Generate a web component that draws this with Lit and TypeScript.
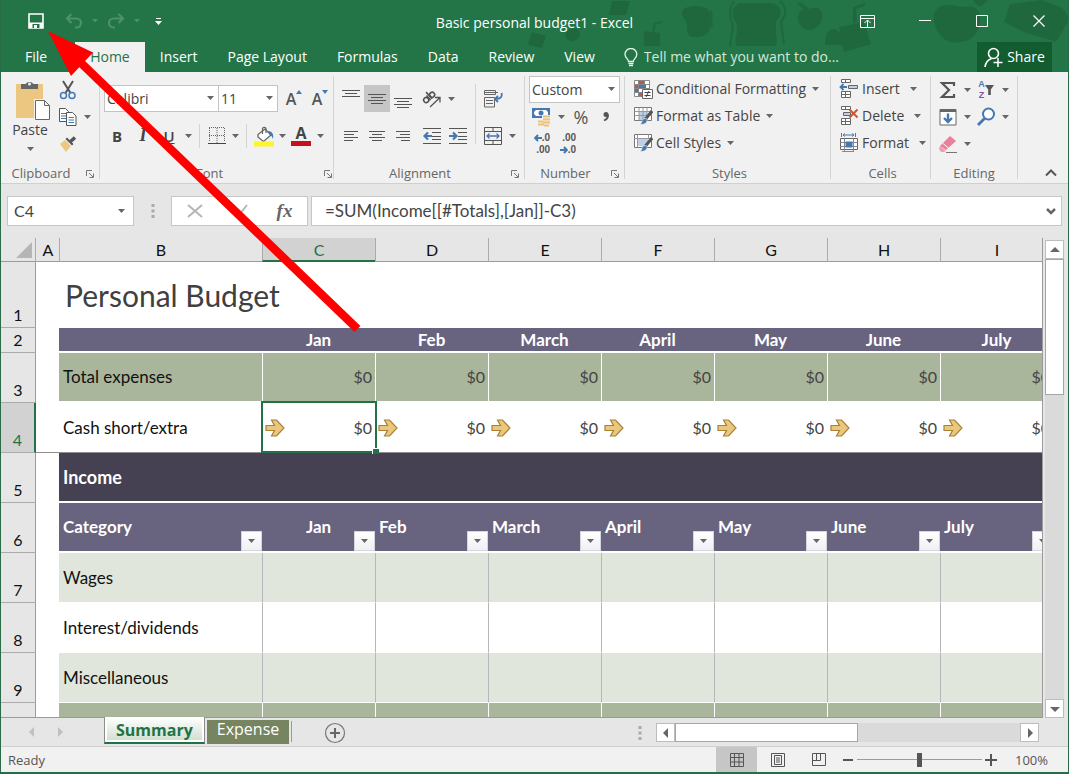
import { LitElement, html, css, svg, nothing } from "lit";
import { customElement, state } from "lit/decorators.js";
import { classMap } from "lit/directives/class-map.js";

const icon = (w: number, h: number, body: unknown) =>
  html`<svg class="icon" width=${w} height=${h} viewBox="0 0 ${w} ${h}" fill="none" aria-hidden="true">${body}</svg>`;

const caret = () => icon(7, 4, svg`<path d="M0 0h7L3.5 4z" fill="#666"/>`);

const launcher = html`<button class="launcher" aria-label="More options">
  ${icon(8, 8, svg`<path d="M.5 6V.5H6M3 3l4 4M7.5 3.5v4h-4" stroke="#777"/>`)}
</button>`;

const lines = (w: number, rows: [number, number, number][]) =>
  icon(w, 18, rows.map(([x, y, len]) => svg`<path d="M${x} ${y + 0.5}h${len}" stroke="#555"/>`));

const alignIcons = {
  top: lines(20, [[1, 0, 18], [4, 3, 12], [1, 6, 18]]),
  middle: lines(20, [[1, 4, 18], [4, 7, 12], [1, 10, 18], [4, 13, 12]]),
  bottom: lines(20, [[1, 8, 18], [4, 11, 12], [1, 14, 18], [4, 17, 12]]),
  left: lines(16, [[1, 4, 14], [1, 7, 10], [1, 10, 14], [1, 13, 9]]),
  center: lines(16, [[0, 4, 16], [3, 7, 10], [0, 10, 16], [3, 13, 10]]),
  right: lines(16, [[1, 4, 14], [5, 7, 10], [1, 10, 14], [6, 13, 9]]),
};

const ic = {
  save: icon(16, 16, svg`<path d="M1 1h14v14H1z" stroke="#fff" stroke-width="1.6"/><path d="M1 9.5h14V15H1z" fill="#fff"/><path d="M4.500 11h7v4h-7z" fill="#217346"/><path d="M6 12h3v3H6z" fill="#fff"/>`),
  undo: icon(18, 16, svg`<path d="M2 5.500h9.500a4.500 4.500 0 0 1 0 9H10M6.500 1L2 5.500l4.500 4.500" stroke="#4d9069" stroke-width="2.200"/>`),
  redo: icon(18, 16, svg`<path d="M16 5.500H6.500a4.500 4.500 0 0 0 0 9H8M11.500 1L16 5.500 11.500 10" stroke="#4d9069" stroke-width="2.200"/>`),
  dimCaret: icon(6, 4, svg`<path d="M0 0h6L3 3.500z" fill="#4d9069"/>`),
  customize: icon(7, 7, svg`<path d="M1 .5h5" stroke="#fff"/><path d="M0 3h7L3.500 7z" fill="#fff"/>`),
  ribbonOpts: icon(15, 13, svg`<path d="M.5.5h14v12H.5zM.5 3.500h14M7.500 12V5.500M4.500 8l3-3 3 3" stroke="#fff"/>`),
  minimize: icon(12, 12, svg`<path d="M0 5.500h12" stroke="#fff"/>`),
  maximize: icon(12, 12, svg`<path d="M.5.5h11v11H.5z" stroke="#fff"/>`),
  close: icon(12, 12, svg`<path d="M.5.5l11 11M11.500.5l-11 11" stroke="#fff" stroke-width="1.200"/>`),
  bulb: icon(14, 19, svg`<path d="M4.500 13.500c0-2.500-3.500-3.500-3.500-7.300a5.900 5.700 0 0 1 11.800 0c0 3.800-3.500 4.800-3.500 7.300z" stroke="#e6f2ea" stroke-width="1.300"/><path d="M4.500 15.500h5M5 17.500h4" stroke="#e6f2ea" stroke-width="1.500"/>`),
  person: icon(19, 21, svg`<circle cx="9.500" cy="6.500" r="5" stroke="#fff" stroke-width="1.600"/><path d="M1 20c.5-4.500 2.500-7 6.500-8.500" stroke="#fff" stroke-width="1.600"/><path d="M14 11v9M9.500 15.500h9" stroke="#fff" stroke-width="1.500"/>`),
  paste: icon(42, 40, svg`<g transform="translate(6 0)"><path d="M1 4h27v34H1z" fill="#ecc782"/><path d="M6 4h4.500a4.500 3.800 0 0 1 8 0H23v5H6z" fill="#666"/><circle cx="14.500" cy="4" r="1.500" fill="#f1f1f1"/><path d="M20.500 20.500h9l5 5v14h-14z" fill="#fff" stroke="#f1f1f1" stroke-width="3"/><path d="M20.500 20.500h9l5 5v14h-14zM29.500 20.500v5h5" fill="#fff" stroke="#666"/></g>`),
  cut: icon(18, 20, svg`<path d="M4 1l7.500 12M14 1L6.500 13" stroke="#555" stroke-width="2"/><circle cx="4.500" cy="15.500" r="3" stroke="#4478b0" stroke-width="1.500"/><circle cx="13" cy="15.500" r="3" stroke="#4478b0" stroke-width="1.500"/>`),
  copy: icon(18, 18, svg`<path d="M.5.5h6l3 3v10h-9z" fill="#fff" stroke="#555"/><path d="M2 5.500h5M2 8h5M2 10.500h5" stroke="#4478b0"/><path d="M7.500 4.500h6l3.500 3.500v9.500H7.500z" fill="#fff" stroke="#555"/><path d="M9.500 9.500h5.500M9.500 12h5.500M9.500 14.500h5.500" stroke="#4478b0"/>`),
  brush: icon(18, 16, svg`<path d="M1 8l5-4 6 6-5 6z" fill="#ecc782"/><path d="M6.500 3l6.500 6.500 1.500-1.500L8 1.500z" fill="#555"/><path d="M11.500 5.500L16 1.500" stroke="#555" stroke-width="3.500"/>`),
  grow: html`<span class="glyph">A</span>${icon(6, 18, svg`<path d="M0 4h6L3 0z" fill="#4478b0"/>`)}`,
  shrink: html`<span class="glyph">A</span>${icon(6, 18, svg`<path d="M0 0h6L3 4z" fill="#4478b0"/>`)}`,
  borders: icon(18, 18, svg`<path d="M1.500 1v14M9 1v16M16.500 1v14M1 .5h16M1 8.500h16" stroke="#666" stroke-dasharray="1 1"/><path d="M0 16.500h18" stroke="#444"/>`),
  fill: icon(22, 22, svg`<path d="M5 9.500L12 4l6 6-7.500 6.500L5 12z" fill="#fff" stroke="#666" stroke-width="1.300"/><path d="M9.500 9V3.500a2 2 0 0 1 3.500 0V8" stroke="#666" stroke-width="1.200"/><path d="M15 6c4 0 6 3 5 8-1-2.500-1.500-3.500-3-4z" fill="#4478b0"/><path d="M1 16.500h20v5H1z" fill="#fbf52a"/>`),
  orient: icon(20, 18, svg`<g stroke="#555" stroke-width="1.600" transform="rotate(-42 8 8)"><circle cx="3.800" cy="7" r="2.500"/><path d="M7 3.800V10"/><circle cx="11.800" cy="7" r="2.500"/><path d="M9 1v9"/></g><path d="M8 17l9.500-9M13 7.500h5v5" stroke="#555" stroke-width="1.300"/>`),
  outdent: icon(18, 16, svg`<path d="M0 .5h18M9 4.500h9M9 8.500h9M9 11.500h9M0 15.500h18" stroke="#555"/><path d="M9 8H2M5 4.500L1.500 8 5 11.500" stroke="#4478b0" stroke-width="2.200"/>`),
  indent: icon(18, 16, svg`<path d="M0 .5h18M9 4.500h9M9 8.500h9M9 11.500h9M0 15.500h18" stroke="#555"/><path d="M0 8h7M4 4.500L7.500 8 4 11.500" stroke="#4478b0" stroke-width="2.200"/>`),
  wrap: icon(20, 20, svg`<path d="M1.500 1.500h11v4h-11zM1.500 8.500h10v9.500h-10zM3 11.500h7M3 14.500h7M1 3.500h14" stroke="#666"/><path d="M18.500 4c1 4-1 6-6 6M15 7l-3 3 3 3" stroke="#4478b0" stroke-width="1.800"/>`),
  merge: icon(20, 20, svg`<path d="M1.500 1.500h17v17h-17zM1 5.500h18M1 14.500h18M10 1.500v4M10 14.500v4" stroke="#555"/><path d="M4 10h12M6.500 7.500L4 10l2.500 2.500M13.500 7.500L16 10l-2.500 2.500" stroke="#4478b0" stroke-width="1.300"/>`),
  currency: icon(20, 20, svg`<path d="M1 1h18v10H1z" fill="#4478b0"/><path d="M3 3h14v6H3z" fill="#fff"/><path d="M3 3h2L3 5zM17 3h-2l2 2zM3 9h2L3 7z" fill="#4478b0"/><circle cx="10" cy="6" r="2.500" fill="#4478b0"/><path d="M11 8h9v12H6v-7h5z" fill="#f1f1f1"/><path d="M12 9.500h7M12 12.500h7M12 15.500h7M7 14.500h5M7 17.500h6M13 18.500h5" stroke="#ecc07a" stroke-width="2"/>`),
  percent: html`<span class="glyph percent">%</span>`,
  comma: icon(10, 12, svg`<circle cx="5" cy="3.500" r="2.500" fill="#555"/><path d="M7 3.500c.3 3-1.500 5-4 6" stroke="#555" stroke-width="1.800"/>`),
  incDec: html`<span class="decimals"><span>${icon(8, 8, svg`<path d="M8 4H2M4 1L1.200 4 4 7" stroke="#4478b0" stroke-width="2"/>`)}.0</span><span>.00</span></span>`,
  decDec: html`<span class="decimals"><span>.00</span><span>${icon(8, 8, svg`<path d="M0 4h6M4 1l2.800 3L4 7" stroke="#4478b0" stroke-width="2"/>`)}.0</span></span>`,
  conditional: icon(20, 20, svg`<path d="M1.500 1.500h15v16h-15zM1.500 5.500h15M1.500 9.500h15M1.500 13.500h15M5.500 1.500v16M11.500 1.500v16" fill="#fff" stroke="#888"/><path d="M6 2h5v3H6zM2 6h3v3H2zM6 14h3v3H6z" fill="#c8524c"/><path d="M6 6h7v3H6zM2 10h3v3H2z" fill="#4478b0"/><path d="M9.500 10.500h10v9h-10z" fill="#fff" stroke="#666"/><path d="M11.500 13.500h6M11.500 16.500h6M16 12l-3 6" stroke="#444"/>`),
  tableFmt: icon(20, 20, svg`<path d="M1.500 1.500h17v13h-17z" fill="#fff" stroke="#777"/><path d="M6 6h8v4H6zM6 10h6v4H6z" fill="#bdd0e8"/><path d="M1.500 5.500h17M1.500 9.500h17M6 1.500v13M10 1.500v13M14 1.500v13" stroke="#999"/><path d="M19 5L12.500 13" stroke="#555" stroke-width="3"/><path d="M13.500 12.500c1.500 3-.5 6-6.500 6 2-1 2-4 3-5.500z" fill="#4478b0" stroke="#f1f1f1" stroke-width=".5"/>`),
  cellStyles: icon(20, 20, svg`<path d="M1.500 1.500h17v13h-17z" fill="#fff" stroke="#777"/><path d="M5 6h10v7H5z" fill="#bdd0e8"/><path d="M1.500 5.500h17M4.500 1.500v13M15.500 1.500v4" stroke="#999"/><path d="M19 5L12.500 13" stroke="#555" stroke-width="3"/><path d="M13.500 12.500c1.500 3-.5 6-6.500 6 2-1 2-4 3-5.500z" fill="#4478b0" stroke="#f1f1f1" stroke-width=".5"/>`),
  insert: icon(20, 20, svg`<path d="M2.500.5h9v3h-9zM6.500.5v3M2.500 12.500h9v6h-9zM2.500 15.500h9M6.500 12.500v6" fill="#fff" stroke="#666"/><path d="M9.500 6.500h9v3h-9z" fill="#bdd0e8" stroke="#666"/><path d="M8 8H2M4.500 5L1.500 8l3 3" stroke="#4478b0" stroke-width="1.800"/>`),
  delete: icon(20, 20, svg`<path d="M2.500.5h9v3h-9zM6.500.5v3M2.500 12.500h9v6h-9zM2.500 15.500h9M6.500 12.500v6" fill="#fff" stroke="#666"/><path d="M4.500 6.500h7v3h-7z" fill="#bdd0e8" stroke="#666"/><path d="M10.500 3.500l8 8M18.500 3.500l-8 8" stroke="#d2542c" stroke-width="2"/>`),
  format: icon(20, 20, svg`<path d="M2.500 0v4M16.500 0v4M4 2h11M6 .5L4 2l2 1.500M13 .5L15 2l-2 1.500" stroke="#4478b0"/><path d="M1.500 5.500h17v11h-17z" fill="#fff" stroke="#666"/><path d="M1.500 9.500h17M1.500 13.500h17M5.500 5.500v13M14.500 5.500v13M3 18.500h12" stroke="#888"/><path d="M6.500 8.500h7v6h-7z" fill="#4478b0"/>`),
  sum: icon(18, 18, svg`<path d="M15 5V2H3l7 7-7 7h12v-3" stroke="#555" stroke-width="2.200"/>`),
  fillDown: icon(18, 18, svg`<path d="M1 1.500h16v15.500H1z" fill="#fff" stroke="#666"/><path d="M1 1h16v3H1z" fill="#666"/><path d="M9 5.500V14M5 10l4 4 4-4" stroke="#4478b0" stroke-width="2.400"/>`),
  clear: icon(20, 18, svg`<path d="M2 11L12 1l6 5L8 15z" fill="#e8809a"/><path d="M2 11l6 5-2 1H3l-2-3z" fill="#eda0b2"/><path d="M5 8.500l6 5" stroke="#fff"/><path d="M8 17.500h11" stroke="#777"/>`),
  sort: html`<span class="sort"><span class="az"><span class="a">A</span><span class="z">Z</span></span>${icon(9, 10, svg`<path d="M0 0h9L5.800 4.500V10H3.200V4.500z" fill="#555"/>`)}</span>`,
  find: icon(20, 19, svg`<circle cx="12.500" cy="7" r="5.500" fill="#fff" stroke="#4478b0" stroke-width="2"/><path d="M8.500 11.500L2 18" stroke="#4478b0" stroke-width="2.800"/>`),
  collapse: icon(12, 8, svg`<path d="M1 6.500l5-5 5 5" stroke="#555" stroke-width="2"/>`),
  expand: icon(10, 7, svg`<path d="M1 1l4 4 4-4" stroke="#666" stroke-width="2.500"/>`),
  grip: icon(4, 14, svg`<path d="M.5 0h3v3h-3zM.5 5.500h3v3h-3zM.5 11h3v3h-3z" fill="#aaa"/>`),
  cancel: icon(16, 14, svg`<path d="M1 1l14 12M15 1L1 13" stroke="#b5b5b5" stroke-width="2"/>`),
  accept: icon(16, 14, svg`<path d="M1 8l4.500 5L15 1" stroke="#b5b5b5" stroke-width="2"/>`),
  goldArrow: icon(20, 18, svg`<path d="M1 6.500h8.500L6.500 1h5L19 9l-7.500 8h-5l3-5.500H1z" fill="#ebc77c" stroke="#a8803a" stroke-width="1.200"/>`),
  normalView: icon(14, 14, svg`<path d="M.5.5h13v13H.5zM.5 4.500h13M.5 9h13M4.500.5v13M9 .5v13" stroke="#555"/>`),
  pageView: icon(14, 14, svg`<path d="M.5.5h13v13H.5zM3.500 2.500h7v9h-7zM5 5h4M5 7h4M5 9h4" stroke="#555"/>`),
  breakView: icon(14, 13, svg`<path d="M.5.5h13v12H.5zM.5 7.500h8V.5M4.500.5v7" stroke="#555"/>`),
  minus: icon(10, 10, svg`<path d="M0 5h10" stroke="#555" stroke-width="2"/>`),
  plus: icon(12, 12, svg`<path d="M0 6h12M6 0v12" stroke="#555" stroke-width="2"/>`),
  addSheet: icon(22, 22, svg`<circle cx="11" cy="11" r="9.500" stroke="#777" stroke-width="1.200"/><path d="M6 11h10M11 6v10" stroke="#666" stroke-width="2"/>`),
};

const triangle = (dir: string, color = "#666") => {
  const d: Record<string, string> = {
    up: "M0 7h10L5 2z", down: "M0 3h10L5 8z", left: "M7 0v10L2 5z", right: "M3 0v10l5-5z",
  };
  return icon(10, 10, svg`<path d=${d[dir]} fill=${color}/>`);
};

const artwork = html`<svg class="artwork" width="549" height="56" viewBox="0 0 549 56" aria-hidden="true">
  <g fill="#1f683e">
    <path d="M92 1h18l-4 14H89zM12 32l14 4-4 12-14-3zM47 31c6-4 13-2 13 3 0 5-5 8-9 7s-8-6-4-10z"/>
    <path d="M124 31l16 2v13h-16zM132 31l2-8 8-2v2l-6 1-2 8z"/>
    <path d="M164 9c8-5 22-3 25 2s0 8 1 13-1 10-7 12-13 2-15-2 0-8-2-12-7-9-2-13z"/>
    <path d="M220 3h32c12 3 10 12 4 18-1 10 2 18 0 25h-40c-2-8 3-14 0-24-6-6-4-17 4-19z"/>
    <path d="M269 9c-3-4-8-7-12-7 3 6 7 8 12 7 10-4 15 3 13 10s-8 12-14 11-11-7-10-13 5-9 11-8z" transform="translate(20 0)"/>
    <path d="M310 30c5-2 8 0 10 4 6 1 9 5 7 11h-22c0-5 1-13 5-15z"/>
    <path d="M320 27l25-5 7 22-27 8zM334 24L334 7l12-4v3l-9 3 1 13zM454 0h14c-4 8-10 8-14 0z" transform="translate(-1 0)"/>
    <path d="M418 7c4-5 16-5 25-2 14-3 20 5 18 16s-9 18-19 19c-12 3-22-5-25-14s-4-14 1-19z" transform="translate(-1 2)"/>
    <path d="M474 22l6-18 32-4 20 8 8 10-14 24-32-10z" transform="translate(10 0)"/>
  </g>
  <g fill="none" stroke="#1f683e" stroke-width="2"><path d="M214 1c-6 8-4 18-1 25l-3 20M260 1c8 8 6 14 1 21l3 22M191 11c2 7-1 8 1 16"/></g>
</svg>`;

const months = ["Jan", "Feb", "March", "April", "May", "June", "July"];
const columns = ["A", "B", "C", "D", "E", "F", "G", "H", "I"];

@customElement("app-root")
export class AppRoot extends LitElement {
  @state() private tab = "Home";
  @state() private zoomLevel = 50;

  static styles = css`
    :host {
      display: block;
      font: 14px/20px "Open Sans", "Noto Sans", sans-serif;
      color: #444;
    }
    * { box-sizing: border-box; }
    button, input, select { font: inherit; color: inherit; border: 0; background: none; padding: 0; margin: 0; outline: none; }
    button { display: inline-flex; align-items: center; justify-content: center; }
    .icon { display: block; flex: none; }
    .window {
      position: relative;
      display: flex;
      flex-direction: column;
      height: 100vh;
      overflow: hidden;
      border: 1px solid #2b6b48;
      border-width: 0 1px 2px;
      background: #e6e6e6;
    }
    .chrome { position: relative; background: #237547; color: #fff; flex: none; margin: 0 -1px; }
    .artwork { position: absolute; right: 0; top: 0; }
    .titlebar { position: relative; display: grid; grid-template-columns: 1fr auto 1fr; align-items: center; height: 42px; }
    .quick { display: flex; align-items: center; padding-left: 23px; }
    .title { padding-top: 4px; }
    .controls { display: flex; justify-content: flex-end; padding-right: 2px; }
    .controls button { width: 57px; height: 40px; }
    .tabs { position: relative; display: flex; height: 30px; align-items: stretch; padding-left: 10px; }
    .tabs .tab { padding: 0 15px; }
    .tabs .file { margin-right: 13px; }
    .tabs .active { background: #f1f1f1; color: #217346; }
    .tell { display: flex; align-items: center; gap: 6px; margin-left: 14px; flex: 1; color: #d5e8dc; }
    .tell input { flex: 1; min-width: 0; }
    .tell input::placeholder { color: #d5e8dc; opacity: 1; }
    .share { background: #135c30; gap: 4px; width: 75px; margin-right: 17px; }

    .ribbon { display: flex; flex: none; height: 112px; background: #f1f1f1; border-bottom: 1px solid #d0d0d0; padding-top: 4px; }
    .group { display: grid; grid-template-rows: 1fr 20px; border-right: 1px solid #d4d4d4; margin-bottom: 4px; padding: 0 4px; }
    .caption { position: relative; text-align: center; font-size: 13px; line-height: 28px; color: #666; padding-right: 18px; }
    .caption.plain { padding-right: 0; }
    .launcher { position: absolute; right: 0; top: 10px; width: 10px; height: 10px; }
    .clipboard { width: 99px; }
    .font { width: 234px; }
    .alignment { width: 191px; }
    .number { width: 100px; }
    .styles { width: 206px; }
    .cells { width: 100px; }
    .editing { width: 87px; }
    .row { display: flex; align-items: center; }
    .stack { display: flex; flex-direction: column; }
    .body { display: flex; min-width: 0; }
    .paste { flex-direction: column; justify-content: flex-start; width: 50px; padding-top: 4px; }
    .paste .caret { padding-top: 7px; }
    .clip-tools .row { height: 27px; }
    .b26 { width: 26px; height: 27px; }
    .b24 { width: 24px; height: 27px; }
    .b12 { width: 12px; height: 27px; }
    .b16 { width: 16px; height: 27px; }
    .on { background: #c6c6c6; }
    .font .stack, .alignment .stack { padding-top: 9px; gap: 10px; }
    .rule { width: 1px; height: 24px; background: #d4d4d4; margin: 0 5px; }
    .alignment .rule { height: 60px; margin: 8px 4px 0; }
    .row-end { padding-left: 3px; }
    .combo { position: relative; display: flex; height: 27px; }
    .combo select { appearance: none; width: 100%; background: #fff; border: 1px solid #c3c3c3; padding: 0 2px; color: #444; }
    .combo .icon { position: absolute; right: 5px; top: 11px; pointer-events: none; }
    .family { width: 115px; }
    .size { width: 60px; margin-left: -1px; }
    .sizes { display: flex; padding-left: 3px; }
    .glyph { font-size: 16px; font-weight: 600; color: #555; }
    .glyph.percent { font-size: 18px; font-weight: 400; }
    .bold { font-weight: 700; font-size: 15px; }
    .italic { font: italic 700 18px "Liberation Serif", serif; }
    .underline { font-weight: 600; font-size: 15px; text-decoration: underline; }
    .font-color { font-weight: 700; font-size: 16px; line-height: 16px; border-bottom: 5px solid #c8101c; width: 20px; text-align: center; }
    .decimals { display: grid; font: 700 10px/12px "Liberation Sans", sans-serif; color: #555; justify-items: end; }
    .decimals span { display: flex; align-items: center; }
    .number .row { height: 27px; }
    .format-select { width: 91px; }
    .command { height: 27px; gap: 3px; justify-content: flex-start; padding-bottom: 1px; }
    .command .icon:last-child { margin-left: 3px; }
    .styles, .cells { padding-left: 8px; }
    .cells .command .icon:last-child { margin-left: 7px; }
    .styles .stack, .cells .stack { align-items: flex-start; }
    .sort { display: flex; align-items: center; }
    .az { display: grid; font: 700 9px/11px "Liberation Sans", sans-serif; }
    .az .a { color: #4478b0; }
    .az .z { color: #8a4fa8; }
    .collapse { margin: 0 7px 0 auto; align-self: flex-end; width: 20px; height: 20px; }

    .formula-bar { display: flex; flex: none; align-items: center; padding: 12px 6px; height: 54px; gap: 3px; }
    .boxed { height: 30px; background: #fff; border: 1px solid #c6c6c6; display: flex; align-items: center; }
    .namebox { position: relative; width: 127px; }
    .namebox select { appearance: none; width: 100%; padding: 0 6px; font: 16px/20px Lato, sans-serif; }
    .namebox .icon { position: absolute; right: 8px; pointer-events: none; }
    .grip { width: 31px; display: flex; justify-content: center; }
    .entry { width: 137px; justify-content: space-around; }
    .fx { font: italic 700 19px "Liberation Serif", serif; color: #666; }
    .formula { flex: 1; padding: 0 5px 0 13px; }
    .formula input { flex: 1; min-width: 0; font: 17px/20px Lato, sans-serif; }

    .main { display: flex; flex: 1; min-height: 0; }
    .sheet { flex: 1; min-width: 0; overflow: hidden; border-right: 1px solid #9b9b9b; border-bottom: 1px solid #9b9b9b; background: linear-gradient(#e6e6e6 24px, #fff 24px); }
    table { border-collapse: separate; border-spacing: 0; table-layout: fixed; width: 1052px; font: 17px/20px Lato, sans-serif; color: #111; }
    .c-head { width: 35px; }
    .c-a { width: 23px; }
    .c-b { width: 203px; }
    .c-m { width: 113px; }
    th, td { position: relative; padding: 0 4px; white-space: nowrap; text-align: left; font-weight: 400; }
    tr { height: 50px; }
    thead tr { height: 24px; }
    thead th { height: 24px; font-size: 16px; text-align: center; background: #e6e6e6; border-bottom: 1px solid #9b9b9b; border-left: 1px solid #ababab; padding: 1px 0 0; }
    thead th:nth-child(-n + 2) { border-left: 0; padding-left: 1px; }
    thead th:first-child { border-right: 1px solid #ababab; }
    thead th.picked { background: #d2d2d2; color: #217346; border-bottom: 2px solid #217346; }
    .corner { position: absolute; right: 3px; bottom: 3px; }
    tbody th { font-size: 16px; background: #e6e6e6; text-align: center; vertical-align: bottom; border-right: 1px solid #9b9b9b; border-bottom: 1px solid #ababab; padding: 0 0 2px; }
    tbody th.picked { background: #d2d2d2; color: #217346; border-right: 2px solid #217346; }
    .r1 { height: 66px; }
    .r2 { height: 25px; }
    .r1 td { font-size: 30px; line-height: 36px; color: #404040; overflow: visible; padding: 0 6px; }
    .dark td:nth-child(n + 3) { color: #fff; font-weight: 700; background: #68637f; border-bottom: 2px solid #fff; }
    .r5 td:nth-child(n + 3) { background: #454153; font-size: 18px; }
    .r2 td { text-align: center; }
    .green td:nth-child(n + 3) { background: #aab69b; border-bottom: 2px solid #fff; }
    .green td:nth-child(n + 4) { border-left: 1px solid #fff; }
    .money td:nth-child(n + 4) { text-align: right; color: #444; padding: 0 3px; font-size: 16px; }
    .r4 td { border-bottom: 1px solid #8f8f8f; }
    .r4 .icon { position: absolute; left: 3px; top: 16px; }
    .selection { position: absolute; inset: -2px -2px -1px -1px; border: 2px solid #217346; pointer-events: none; z-index: 2; }
    .selection::after { content: ""; position: absolute; right: -4px; bottom: -3px; width: 6px; height: 5px; background: #217346; border: 1px solid #fff; border-width: 1px 0 0 1px; }
    .band td:nth-child(n + 3) { background: #e0e6dc; }
    .lined td:nth-child(n + 4) { border-left: 1px solid #b4b8b8; }
    .lined td:nth-child(n + 3) { border-bottom: 1px solid #fff; }
    .center { text-align: center; }
    .filter { position: absolute; right: 0; bottom: 0; width: 21px; height: 20px; border: 1px solid #d5d5dc; background: linear-gradient(#fff, #eef0f5); }

    .vscroll { display: flex; flex-direction: column; width: 25px; padding: 2px 4px 0 2px; }
    .scroll-button { width: 19px; height: 19px; background: #fff; border: 1px solid #bdbdbd; flex: none; }
    .track { flex: 1; display: flex; background: #dadada; }
    .thumb { background: #fff; border: 1px solid #a6a6a6; }
    .vscroll .track { flex-direction: column; }
    .vscroll .thumb { flex: 0 0 31%; }
    .hscroll { display: flex; width: 383px; height: 19px; }
    .hscroll .thumb { flex: 0 0 53%; }

    .sheet-bar { display: flex; flex: none; height: 29px; align-items: flex-start; border-bottom: 1px solid #cfcfcf; }
    .nav { display: flex; width: 103px; padding: 9px 0 0 17px; gap: 0; }
    .nav button { width: 28px; height: 10px; }
    .sheet-tab { height: 26px; padding: 0 11px; font-size: 16px; margin-right: 2px; }
    .summary { margin-top: -1px; height: 27px; border: 1px solid #8c8c8c; border-width: 0 1px 2px; border-bottom-color: #217346; box-shadow: inset 0 0 0 2px #fff; background: linear-gradient(#fff, #cfdccd); color: #217346; font-weight: 700; }
    .expense { margin-top: 2px; height: 24px; background: #76855f; color: #fff; padding: 0 10px 6px; }
    .divider { width: 1px; height: 21px; background: #9b9b9b; margin-top: 3px; }
    .add { margin: 4px 0 0 32px; }
    .sheet-end { display: flex; margin: 5px 29px 0 auto; align-items: center; gap: 14px; }

    .status { display: flex; flex: none; height: 25px; align-items: stretch; background: #f1f1f1; font-size: 13px; color: #555; padding-right: 20px; }
    .ready { margin: 3px auto 0 7px; }
    .view { width: 41px; }
    .status .zoom { width: 18px; }
    .range { appearance: none; width: 125px; height: 25px; background: linear-gradient(#9b9b9b, #9b9b9b) center / 100% 1px no-repeat; }
    .range::-webkit-slider-thumb { appearance: none; width: 5px; height: 14px; background: #555; }
    .percent-label { width: 48px; text-align: right; padding-top: 3px; }
    .pointer { position: absolute; left: -1px; top: 0; z-index: 5; pointer-events: none; }
  `;

  private btn(label: string, body: unknown, cls = "b26") {
    return html`<button class=${cls} aria-label=${label}>${body}</button>`;
  }

  private drop(label: string, cls = "b12") {
    return this.btn(`${label} options`, caret(), cls);
  }

  private combo(label: string, value: string, cls: string) {
    return html`<span class="combo ${cls}"><select aria-label=${label}><option>${value}</option></select>${caret()}</span>`;
  }

  private command(label: string, body: unknown) {
    return html`<button class="command">${body}<span>${label}</span>${caret()}</button>`;
  }

  private renderChrome() {
    const tabs = ["File", "Home", "Insert", "Page Layout", "Formulas", "Data", "Review", "View"];
    return html`<header class="chrome">
      ${artwork}
      <div class="titlebar">
        <div class="quick">
          ${this.btn("Save", ic.save)}
          <span class="b12"></span>
          ${this.btn("Undo", ic.undo)} ${this.btn("Undo options", ic.dimCaret, "b16")}
          ${this.btn("Redo", ic.redo)} ${this.btn("Redo options", ic.dimCaret, "b16")}
          ${this.btn("Customize toolbar", ic.customize)}
        </div>
        <div class="title">Basic personal budget1 - Excel</div>
        <div class="controls">
          ${this.btn("Ribbon display options", ic.ribbonOpts, "")}${this.btn("Minimize", ic.minimize, "")}
          ${this.btn("Maximize", ic.maximize, "")}${this.btn("Close", ic.close, "")}
        </div>
      </div>
      <nav class="tabs">
        ${tabs.map((t) => html`<button
          class=${classMap({ tab: true, file: t === "File", active: t === this.tab })}
          @click=${() => (this.tab = t)}>${t}</button>`)}
        <label class="tell">${ic.bulb}<input aria-label="Tell me" placeholder="Tell me what you want to do..." /></label>
        <button class="share">${ic.person}Share</button>
      </nav>
    </header>`;
  }

  private renderRibbon() {
    return html`<section class="ribbon">
      <div class="group clipboard">
        <div class="body">
          <button class="paste">${ic.paste}<span>Paste</span><span class="caret">${caret()}</span></button>
          <div class="stack clip-tools">
            <div class="row">${this.btn("Cut", ic.cut)}</div>
            <div class="row">${this.btn("Copy", ic.copy)}${this.drop("Copy")}</div>
            <div class="row">${this.btn("Format painter", ic.brush)}</div>
          </div>
        </div>
        <div class="caption">Clipboard${launcher}</div>
      </div>
      <div class="group font">
        <div class="stack">
          <div class="row">
            ${this.combo("Font", "Calibri", "family")}${this.combo("Font size", "11", "size")}
            <span class="sizes">${this.btn("Increase font size", ic.grow)}${this.btn("Decrease font size", ic.shrink)}</span>
          </div>
          <div class="row">
            ${this.btn("Bold", html`<span class="bold">B</span>`)}${this.btn("Italic", html`<span class="italic">I</span>`)}
            ${this.btn("Underline", html`<span class="underline">U</span>`)}${this.drop("Underline")}
            <span class="rule"></span>${this.btn("Borders", ic.borders, "b24")}${this.drop("Borders")}
            <span class="rule"></span>${this.btn("Fill color", ic.fill, "b24")}${this.drop("Fill color")}
            ${this.btn("Font color", html`<span class="font-color">A</span>`)}${this.drop("Font color")}
          </div>
        </div>
        <div class="caption">Font${launcher}</div>
      </div>
      <div class="group alignment">
        <div class="body">
          <div class="stack">
            <div class="row">
              ${this.btn("Top align", alignIcons.top)}${this.btn("Middle align", alignIcons.middle, "b26 on")}${this.btn("Bottom align", alignIcons.bottom)}
              <span class="row row-end">${this.btn("Orientation", ic.orient)}${this.drop("Orientation")}</span>
            </div>
            <div class="row">
              ${this.btn("Align left", alignIcons.left)}${this.btn("Center", alignIcons.center)}${this.btn("Align right", alignIcons.right)}
              <span class="row row-end">${this.btn("Decrease indent", ic.outdent)}${this.btn("Increase indent", ic.indent)}</span>
            </div>
          </div>
          <span class="rule"></span>
          <div class="stack">
            <div class="row">${this.btn("Wrap text", ic.wrap)}</div>
            <div class="row">${this.btn("Merge and center", ic.merge)}${this.drop("Merge")}</div>
          </div>
        </div>
        <div class="caption">Alignment${launcher}</div>
      </div>
      <div class="group number">
        <div>
          ${this.combo("Number format", "Custom", "format-select")}
          <div class="row">${this.btn("Accounting format", ic.currency, "b24")}${this.drop("Accounting", "b16")}${this.btn("Percent style", ic.percent, "b24")}${this.btn("Comma style", ic.comma)}</div>
          <div class="row">${this.btn("Increase decimal", ic.incDec)}${this.btn("Decrease decimal", ic.decDec)}</div>
        </div>
        <div class="caption">Number${launcher}</div>
      </div>
      <div class="group styles">
        <div class="stack">
          ${this.command("Conditional Formatting", ic.conditional)}
          ${this.command("Format as Table", ic.tableFmt)}
          ${this.command("Cell Styles", ic.cellStyles)}
        </div>
        <div class="caption plain">Styles</div>
      </div>
      <div class="group cells">
        <div class="stack">
          ${this.command("Insert", ic.insert)}${this.command("Delete", ic.delete)}${this.command("Format", ic.format)}
        </div>
        <div class="caption plain">Cells</div>
      </div>
      <div class="group editing">
        <div>
          <div class="row">${this.btn("AutoSum", ic.sum)}${this.drop("AutoSum")}${this.btn("Sort and filter", ic.sort)}${this.drop("Sort")}</div>
          <div class="row">${this.btn("Fill", ic.fillDown)}${this.drop("Fill")}${this.btn("Find", ic.find)}${this.drop("Find")}</div>
          <div class="row">${this.btn("Clear", ic.clear)}${this.drop("Clear")}</div>
        </div>
        <div class="caption plain">Editing</div>
      </div>
      <button class="collapse" aria-label="Collapse the ribbon">${ic.collapse}</button>
    </section>`;
  }

  private renderFormulaBar() {
    return html`<section class="formula-bar">
      <span class="boxed namebox"><select aria-label="Name box"><option>C4</option></select>${caret()}</span>
      <span class="grip">${ic.grip}</span>
      <span class="boxed entry">
        ${this.btn("Cancel", ic.cancel, "")}${this.btn("Enter", ic.accept, "")}
        <button class="fx" aria-label="Insert function">fx</button>
      </span>
      <span class="boxed formula">
        <input aria-label="Formula" .value=${"=SUM(Income[[#Totals],[Jan]]-C3)"} />
        ${this.btn("Expand formula bar", ic.expand, "")}
      </span>
    </section>`;
  }

  private row(n: number, cls: string, label: string, cells: (i: number) => unknown) {
    return html`<tr class="r${n} ${cls}">
      <th class=${n === 4 ? "picked" : ""} scope="row">${n > 9 ? nothing : n}</th>
      <td></td>
      ${n === 1
        ? html`<td colspan="8">${label}</td>`
        : html`<td>${label}${n === 6 ? this.filter(label) : nothing}</td>
            ${months.map((_, i) => html`<td class=${n === 6 && i === 0 ? "center" : ""}>${cells(i)}</td>`)}`}
    </tr>`;
  }

  private filter(name: string) {
    return html`<button class="filter" aria-label="Filter ${name}">${caret()}</button>`;
  }

  private renderSheet() {
    const blank = () => nothing;
    return html`<main class="main">
      <div class="sheet">
        <table>
          <colgroup>
            <col class="c-head" /><col class="c-a" /><col class="c-b" />
            ${months.map(() => html`<col class="c-m" />`)}
          </colgroup>
          <thead>
            <tr>
              <th><span class="corner">${icon(16, 16, svg`<path d="M16 0v16H0z" fill="#b5b5b5"/>`)}</span></th>
              ${columns.map((c) => html`<th scope="col" class=${c === "C" ? "picked" : ""}>${c}</th>`)}
            </tr>
          </thead>
          <tbody>
            ${this.row(1, "", "Personal Budget", blank)}
            ${this.row(2, "dark", "", (i) => months[i])}
            ${this.row(3, "green money", "Total expenses", () => "$0")}
            ${this.row(4, "money", "Cash short/extra", (i) => html`${ic.goldArrow}$0${i === 0 ? html`<span class="selection"></span>` : nothing}`)}
            ${this.row(5, "dark", "Income", blank)}
            ${this.row(6, "dark", "Category", (i) => html`${months[i]}${this.filter(months[i])}`)}
            ${this.row(7, "band lined", "Wages", blank)}
            ${this.row(8, "lined", "Interest/dividends", blank)}
            ${this.row(9, "band lined", "Miscellaneous", blank)}
            ${this.row(10, "green", "", blank)}
          </tbody>
        </table>
      </div>
      <div class="vscroll">
        ${this.btn("Scroll up", triangle("up"), "scroll-button")}
        <div class="track"><div class="thumb"></div></div>
        ${this.btn("Scroll down", triangle("down"), "scroll-button")}
      </div>
    </main>`;
  }

  private renderFooter() {
    return html`<section class="sheet-bar">
        <div class="nav">${this.btn("Previous sheet", triangle("left", "#c0c0c0"), "")}${this.btn("Next sheet", triangle("right", "#c0c0c0"), "")}</div>
        <button class="sheet-tab summary">Summary</button>
        <button class="sheet-tab expense">Expense</button>
        <span class="divider"></span>
        <button class="add" aria-label="New sheet">${ic.addSheet}</button>
        <div class="sheet-end">
          ${ic.grip}
          <div class="hscroll">
            ${this.btn("Scroll left", triangle("left"), "scroll-button")}
            <div class="track"><div class="thumb"></div></div>
            ${this.btn("Scroll right", triangle("right"), "scroll-button")}
          </div>
        </div>
      </section>
      <footer class="status">
        <span class="ready">Ready</span>
        ${this.btn("Normal view", ic.normalView, "view on")}${this.btn("Page layout view", ic.pageView, "view")}${this.btn("Page break preview", ic.breakView, "view")}
        ${this.btn("Zoom out", ic.minus, "zoom")}
        <input class="range" type="range" aria-label="Zoom" .value=${String(this.zoomLevel)} />
        ${this.btn("Zoom in", ic.plus, "zoom")}
        <span class="percent-label">100%</span>
      </footer>`;
  }

  render() {
    return html`<div class="window">
      ${this.renderChrome()} ${this.renderRibbon()} ${this.renderFormulaBar()} ${this.renderSheet()} ${this.renderFooter()}
      <svg class="pointer" width="370" height="340" viewBox="0 0 370 340" aria-hidden="true">
        <path d="M80 62L357.500 329" stroke="#fe0000" stroke-width="8.500" />
        <path d="M48 31l45 21.500L71 76z" fill="#fe0000" />
      </svg>
    </div>`;
  }
}
